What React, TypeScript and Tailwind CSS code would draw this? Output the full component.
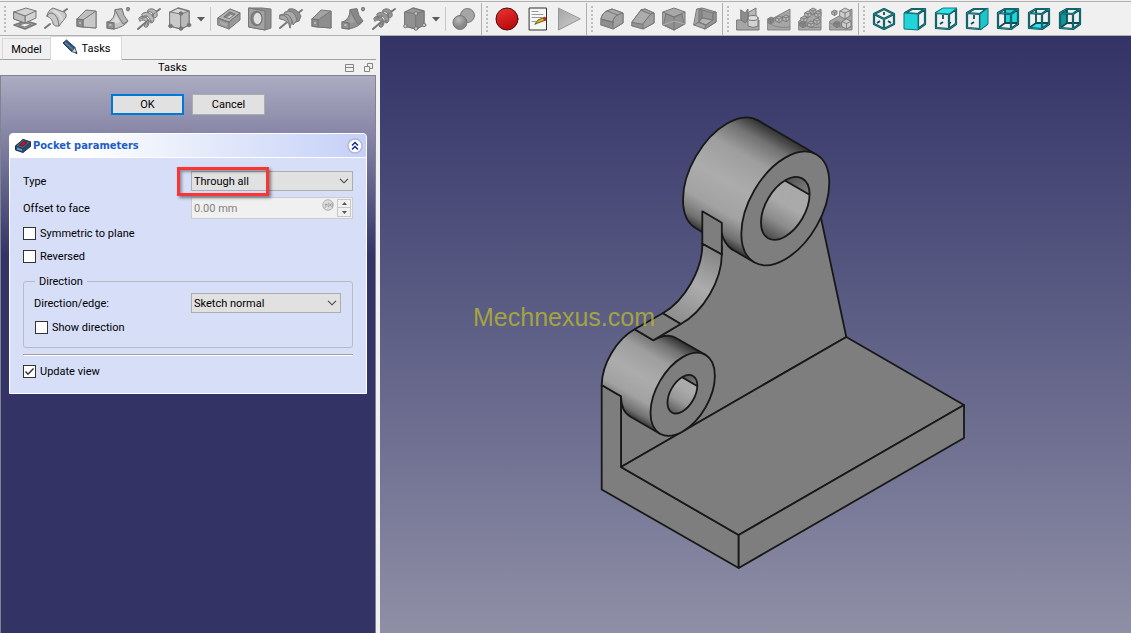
import React from "react";

type IconProps = { children: React.ReactNode; label: string };

function ToolButton({ children, label }: IconProps) {
  return (
    <button type="button" aria-label={label} className="flex h-[31px] w-[31px] shrink-0 items-center justify-center">
      <svg viewBox="0 0 24 24" className="h-6 w-6" strokeLinejoin="round" strokeLinecap="round" aria-hidden="true">
        {children}
      </svg>
    </button>
  );
}

function MenuArrow({ label }: { label: string }) {
  return (
    <button type="button" aria-label={label} className="flex h-[31px] w-3 shrink-0 items-center justify-center">
      <svg viewBox="0 0 8 5" className="h-[5px] w-2" aria-hidden="true">
        <path d="M0 0H8L4 4.5Z" fill="#5a5a5a" />
      </svg>
    </button>
  );
}

function Divider() {
  return (
    <div className="flex w-1.5 shrink-0 justify-center">
      <div className="h-6 w-px bg-[#c8c8c8]" />
    </div>
  );
}

function ToolGroup({ children, label, last = false }: IconProps & { last?: boolean }) {
  return (
    <div
      role="toolbar"
      aria-label={label}
      className={last ? "flex h-full items-center" : "flex h-full shrink-0 items-center border-r border-[#b0b0b0] pr-0.5"}
    >
      <svg viewBox="0 0 9 28" className="h-7 w-[9px] shrink-0" aria-hidden="true">
        {[1, 5, 9, 13, 17, 21, 25].map((y) => (
          <rect key={y} x="4" y={y} width="2" height="2" fill="#bdbdbd" />
        ))}
      </svg>
      {children}
    </div>
  );
}

const EDGE = "#777777";

/* Solid modelling icons */
const Pad = () => (
  <g stroke={EDGE}>
    <path d="M1 18 13 14 23 17 12 22Z" fill="#ababab" strokeWidth="1.6" />
    <path d="M6 18 13 16 18 17.5 12 20Z" fill="#ededed" />
    <path d="M1 5 13 1 23 4V11L12 16 1 12Z" fill="#d2d2d2" />
    <path d="M1 5 12 9 23 4M12 9V16" fill="none" />
    <path d="M1 5 12 9V16L1 12Z" fill="#c0c0c0" />
  </g>
);
const Revolution = () => (
  <g stroke={EDGE}>
    <path d="M1 21 6 17M19 5 23 2" strokeWidth="2" />
    <path d="M3 9Q4 3 9 1L20 5Q23 6 22 10L15 19Q11 20 9 17Q9 12 3 9Z" fill="#c9c9c9" />
    <path d="M3 9Q5 5 8 6Q14 8 15 19" fill="none" />
    <path d="M10 4Q17 7 18 13" fill="none" stroke="#dedede" strokeWidth="2" />
  </g>
);
const Loft = ({ dark = false }: { dark?: boolean }) => (
  <g stroke={EDGE}>
    <path d="M2 12 11 3 21 4V21L9 20Z" fill={dark ? "#a2a2a2" : "#bfbfbf"} />
    <path d="M8 13 21 4V21L8 20Z" fill={dark ? "#8e8e8e" : "#c8c8c8"} />
    <path d="M2 12 8 13V20L2 19Z" fill="#999" strokeWidth="1.5" />
    <path d="M4 14.500H6.500V17.500H4Z" fill="#b8b8b8" strokeWidth=".6" />
  </g>
);
const Pipe = ({ dark = false }: { dark?: boolean }) => (
  <g stroke={EDGE}>
    <path d="M2 15Q9 12 9 3L16 2Q17 11 22 14 18 20 8 22Z" fill={dark ? "#929292" : "#c6c6c6"} />
    <path d="M9 3Q13 11 17 17L22 14Q17 9 16 2Z" fill={dark ? "#888" : "#b5b5b5"} />
    <path d="M5 15Q10 12 10 7L14 15 8 17Z" fill={dark ? "#a0a0a0" : "#dcdcdc"} stroke="none" />
    <path d="M1 15 8 16V22L1 21Z" fill="#999" strokeWidth="1.4" />
    <path d="M3 17H6V19H3Z" fill="#ccc" strokeWidth=".5" />
    <ellipse cx="22" cy="2" rx="1.500" ry="2" fill="#999" />
  </g>
);
const Helix = ({ dark = false }: { dark?: boolean }) => (
  <g>
    <path d="M1 22 8 16M16 7 23 2" stroke={EDGE} strokeWidth="2" />
    <g fill={dark ? "#979797" : "#b9b9b9"} stroke={EDGE}>
      <path d="M2 11Q5 7 10 11 14 16 10 20 8 21 7 19 11 15 7 13 4 13 3 14Z" />
      <path d="M5 7Q9 3 15 8 19 13 15 16 12 16 13 14 14 11 10 9 7 8 6 10Z" />
      <path d="M11 3Q15 0 19 4 22 9 18 11 16 11 16 9 18 7 14 5 12 4 11 5Z" />
      <path d="M3 11Q8 12 10 9M10 18Q11 13 15 14M16 10Q14 8 18 6" fill="none" />
    </g>
    <path d="M8 16 11 13" stroke={EDGE} strokeWidth="1.500" />
  </g>
);
const Primitive = ({ dark = false }: { dark?: boolean }) => (
  <g stroke={EDGE}>
    <path d="M2 5 10 1 21 4V18L13 22 2 19Z" fill={dark ? "#9a9a9a" : "#d8d8d8"} strokeWidth="1.300" />
    <path d="M2 5 13 7V22L2 19Z" fill={dark ? "#919191" : "#cacaca"} />
    <path d="M13 7 21 4V18L13 22Z" fill={dark ? "#8a8a8a" : "#bababa"} />
    <g fill={dark ? "#c4c4c4" : "#777"}>
      <circle cx="13" cy="6.500" r="1.800" />
      <circle cx="2.500" cy="19" r="1.800" />
      <circle cx="13" cy="21.500" r="1.800" />
      <circle cx="21" cy="18" r="1.800" />
    </g>
  </g>
);
const Pocket = () => (
  <g stroke={EDGE}>
    <path d="M1 11 13 2 23 6V13L12 22 1 18Z" fill="#989898" />
    <path d="M1 11 13 2 23 6 12 15Z" fill="#b6b6b6" />
    <path d="M7 10 13 5 18 7 12 11.500Z" fill="#8b8b8b" strokeWidth="1.300" />
    <path d="M10 10.500 14 8 16 8.500 12 11Z" fill="#d8d8d8" stroke="none" />
    <path d="M1 11 12 15V22M12 15 23 6" fill="none" />
    <path d="M3 14 10 16.500V19.500L3 17Z" fill="#a8a8a8" stroke="none" />
  </g>
);
const Hole = () => (
  <g stroke={EDGE}>
    <path d="M1 1H14L23 2V21L17 23 1 20Z" fill="#8e8e8e" />
    <path d="M1 1 17 4V23L1 20Z" fill="#a3a3a3" />
    <ellipse cx="8.500" cy="11.500" rx="5.500" ry="7" fill="#858585" strokeWidth="1.400" />
    <ellipse cx="9.500" cy="11.500" rx="3.800" ry="5.800" fill="#e2e2e2" stroke="none" />
  </g>
);
const Groove = () => (
  <g stroke={EDGE}>
    <path d="M1 21 7 16M18 7 23 3" strokeWidth="2" />
    <path d="M10 2Q17 0 22 9L20 14 14 16 8 6Z" fill="#8e8e8e" />
    <path d="M6 5Q15 1 18 13L14 18Q13 9 6 8Z" fill="#aaa" />
    <path d="M1 8Q10 4 13 14L11 21Q10 13 1 12Z" fill="#a6a6a6" />
    <path d="M1 8Q10 6 11 21" fill="none" />
  </g>
);
const BooleanOp = () => (
  <g stroke={EDGE}>
    <circle cx="15.500" cy="8.500" r="7" fill="#a6a6a6" />
    <circle cx="8" cy="15.500" r="7" fill="url(#ball)" />
  </g>
);

/* Macro icons */
const Record = () => <circle cx="12" cy="12" r="11" fill="url(#record)" stroke="#4a1010" />;
const MacroEdit = () => (
  <g>
    <path d="M3.500 1H20.500V23H3.500Z" fill="#f5f7f5" stroke="#333" strokeLinejoin="miter" />
    <path d="M6 4.500H12M6 7.500H17M6 10.500H16M6 14.500H10" stroke="#9a9a9a" />
    <path d="M9 17 12 13 19 10 20 13 12 16Z" fill="#d9b41d" stroke="#4b4316" strokeWidth=".8" />
    <path d="M17 11 20 10.500V13L18 14Z" fill="#d92020" />
  </g>
);
const Play = () => <path d="M1.500 1.500V23L23 12Z" fill="url(#play)" stroke="#959595" />;

/* Dress-up icons */
const Fillet = () => (
  <g stroke={EDGE}>
    <path d="M1 12Q2 6 7 4L12 2 23 6V16L13 22 1 18Z" fill="#8f8f8f" />
    <path d="M1 12Q2 6 7 4L12 2 23 6 18 8Q13 10 13 15Z" fill="#a9a9a9" />
    <path d="M13 15V22L23 16V6Q13 8 13 15Z" fill="#a0a0a0" />
    <path d="M7 4 18 8M1 12 13 15" fill="none" />
  </g>
);
const Chamfer = () => (
  <g stroke={EDGE}>
    <path d="M1 15 10 3 14 2 23 6V16L12 22 1 19Z" fill="#929292" />
    <path d="M1 15 10 3 20 7 12 17Z" fill="#acacac" />
    <path d="M12 17V22L23 16V6L20 7Z" fill="#a0a0a0" />
    <path d="M10 3 14 2 23 6 20 7Z" fill="#a4a4a4" />
  </g>
);
const Draft = () => (
  <g stroke={EDGE}>
    <path d="M1 5 12 1 23 5V17L12 23 1 18Z" fill="#a8a8a8" />
    <path d="M4 7 12 10 20 7 22 17 12 23 2 18Z" fill="#929292" />
    <path d="M1 5 12 10 23 5M12 10V23" fill="none" />
    <path d="M1 18 12 14 23 17" fill="none" stroke="#b5b5b5" strokeWidth=".8" />
  </g>
);
const Thickness = () => (
  <g stroke={EDGE}>
    <path d="M4 2 9 1 23 5V15L12 22 1 18Z" fill="#a4a4a4" />
    <path d="M9 3 20 6V13L9 11Z" fill="#969696" />
    <path d="M6 3V15L9 11V3Z" fill="#8a8a8a" />
    <path d="M6 15 9 11 20 13 13 18Z" fill="#b2b2b2" />
    <path d="M13 18 20 13V6L23 5V15L12 22Z" fill="#959595" />
    <path d="M1 18 6 15 13 18" fill="none" />
  </g>
);

/* Pattern icons */
const Block = ({ x, y, s = 5, fill = "#b8b8b8" }: { x: number; y: number; s?: number; fill?: string }) => (
  <g transform={`translate(${x} ${y})`} stroke={EDGE} strokeWidth=".9">
    <path d={`M0 ${s * 0.3} ${s * 0.5} 0 ${s} ${s * 0.25}V${s * 0.8}L${s * 0.5} ${s * 1.1} 0 ${s * 0.85}Z`} fill={fill} />
    <path d={`M0 ${s * 0.3} ${s * 0.5} ${s * 0.5} ${s} ${s * 0.25}M${s * 0.5} ${s * 0.5}V${s * 1.1}`} fill="none" />
  </g>
);
const Ground = () => (
  <g stroke="#858585">
    <path d="M1 14 23 2V23H1Z" fill="#a6a6a6" />
    <path d="M1 16Q10 22 23 20" fill="none" />
  </g>
);
const Mirrored = () => (
  <g stroke={EDGE}>
    <path d="M1 13H23V23H1Z" fill="#a6a6a6" />
    <path d="M13 5 20 1V12H13Z" fill="#b8b8b8" />
    <path d="M5 3 9 6 12 2V13L9 16 5 13Z" fill="#8c8c8c" />
    <path d="M12 11V19Q17 22 22 19V11Z" fill="#d2d2d2" />
    <ellipse cx="17" cy="11" rx="5" ry="2.500" fill="#dedede" />
  </g>
);
const LinearPattern = () => (
  <g>
    <Ground />
    <Block x={1} y={10} s={6} fill="#888" />
    <Block x={9} y={9} s={6} />
    <Block x={16} y={8} s={6} />
  </g>
);
const PolarPattern = () => (
  <g>
    <Ground />
    <Block x={12} y={1} s={6} />
    <Block x={17} y={4} s={6} />
    <Block x={7} y={4} s={6} />
    <Block x={3} y={9} s={6} />
    <Block x={16} y={11} s={6} />
    <Block x={2} y={14} s={6} fill="#888" />
    <Block x={10} y={14} s={6} />
  </g>
);
const MultiTransform = () => (
  <g>
    <Ground />
    <Block x={3} y={3} />
    <Block x={11} y={1} s={10} fill="#ccc" />
    <Block x={5} y={14} s={6} fill="#888" />
    <Block x={13} y={12} s={9} fill="#ccc" />
  </g>
);

/* Standard view icons */
const CUBE_FRAME = "M2 6 9 2H22V17L15 22 2 21ZM2 6 15 7 22 2M15 7V22";
const CUBE_STUBS = "M9 8V12M6 17 9 15M14 15 17 16";
const CUBE_BACK = "M9 2V16M9 16H22M9 16 2 21";
const VIEWS: Record<string, { face: string; fill: string; back: string; over: boolean }> = {
  front: { face: "M1 6 15 7V23L1 22Z", fill: "#20d4da", back: "", over: true },
  top: { face: "M1 6 9 1H23L15 7Z", fill: "#30e3ea", back: CUBE_STUBS, over: true },
  right: { face: "M15 7 23 1V17L15 23Z", fill: "#1cc5cb", back: CUBE_STUBS, over: true },
  rear: { face: "M9 3H22V16H9Z", fill: "#20d4da", back: CUBE_BACK, over: false },
  bottom: { face: "M2 21 9 16H22L15 22Z", fill: "#30e3ea", back: CUBE_BACK, over: false },
  left: { face: "M2 6 9 2V16L2 21Z", fill: "#11969b", back: CUBE_BACK, over: false },
};
const ViewCube = ({ face }: { face: string }) => {
  const view = VIEWS[face];
  return (
    <g fill="none" strokeLinecap="butt">
      {!view.over && <path d={view.face} fill={view.fill} />}
      <path d={view.back} stroke="#0b4f54" strokeWidth="1.800" />
      <path d={CUBE_FRAME} stroke="#07424a" strokeWidth="2.200" />
      <path d={CUBE_FRAME} stroke="#21a0a6" strokeWidth=".8" />
      {view.over && <path d={view.face} fill={view.fill} stroke="#0d7177" strokeWidth=".9" />}
    </g>
  );
};
const ISO_FRAME = "M12 2 22 7V17L12 22 2 17V7ZM2 7 12 12 22 7M12 12V22";
const IsoCube = () => (
  <g fill="none" strokeLinecap="butt">
    <path d="M12 5V8M5 16 8 14M19 16 16 14" stroke="#0b4f54" strokeWidth="1.800" />
    <path d={ISO_FRAME} stroke="#07424a" strokeWidth="2.200" />
    <path d={ISO_FRAME} stroke="#21a0a6" strokeWidth=".8" />
  </g>
);

function Toolbars() {
  return (
    <header className="flex h-9 shrink-0 items-stretch overflow-hidden border-b border-[#b0b0b0] bg-[#f0f0f0] pt-px">
      <div className="flex flex-1 border-t border-[#b0b0b0] pt-px">
        <ToolGroup label="Part design">
          <ToolButton label="Pad"><Pad /></ToolButton>
          <ToolButton label="Revolution"><Revolution /></ToolButton>
          <ToolButton label="Additive loft"><Loft /></ToolButton>
          <ToolButton label="Additive pipe"><Pipe /></ToolButton>
          <ToolButton label="Additive helix"><Helix /></ToolButton>
          <ToolButton label="Additive primitive"><Primitive /></ToolButton>
          <MenuArrow label="More additive primitives" />
          <Divider />
          <ToolButton label="Pocket"><Pocket /></ToolButton>
          <ToolButton label="Hole"><Hole /></ToolButton>
          <ToolButton label="Groove"><Groove /></ToolButton>
          <ToolButton label="Subtractive loft"><Loft dark /></ToolButton>
          <ToolButton label="Subtractive pipe"><Pipe dark /></ToolButton>
          <ToolButton label="Subtractive helix"><Helix dark /></ToolButton>
          <ToolButton label="Subtractive primitive"><Primitive dark /></ToolButton>
          <MenuArrow label="More subtractive primitives" />
          <Divider />
          <ToolButton label="Boolean operation"><BooleanOp /></ToolButton>
        </ToolGroup>
        <ToolGroup label="Macro">
          <ToolButton label="Record macro"><Record /></ToolButton>
          <ToolButton label="Edit macros"><MacroEdit /></ToolButton>
          <ToolButton label="Run macro"><Play /></ToolButton>
        </ToolGroup>
        <ToolGroup label="Dress-up">
          <ToolButton label="Fillet"><Fillet /></ToolButton>
          <ToolButton label="Chamfer"><Chamfer /></ToolButton>
          <ToolButton label="Draft"><Draft /></ToolButton>
          <ToolButton label="Thickness"><Thickness /></ToolButton>
        </ToolGroup>
        <ToolGroup label="Transformations">
          <ToolButton label="Mirrored"><Mirrored /></ToolButton>
          <ToolButton label="Linear pattern"><LinearPattern /></ToolButton>
          <ToolButton label="Polar pattern"><PolarPattern /></ToolButton>
          <ToolButton label="Multi-transform"><MultiTransform /></ToolButton>
        </ToolGroup>
        <ToolGroup label="Views" last>
          <ToolButton label="Isometric"><IsoCube /></ToolButton>
          {["front", "top", "right", "rear", "bottom", "left"].map((face) => (
            <ToolButton key={face} label={face}><ViewCube face={face} /></ToolButton>
          ))}
        </ToolGroup>
      </div>
    </header>
  );
}

function Tabs() {
  return (
    <div role="tablist" className="flex h-6 shrink-0 items-stretch">
      <div className="w-0.5 border-b border-[#a0a0a0]" />
      <button role="tab" type="button" aria-selected="false" className="mt-0.5 w-12 border border-r-0 border-[#d9d9d9] border-b-[#a0a0a0]">
        Model
      </button>
      <button role="tab" type="button" aria-selected="true" className="flex w-[72px] items-center justify-center gap-1 border-x border-t border-[#d9d9d9] bg-white">
        <svg viewBox="0 0 16 16" className="mb-1 h-4 w-4" strokeLinejoin="round" aria-hidden="true">
          <path d="M1 4 4.500 1 13 8.500 9.500 12.500Z" fill="#34597c" stroke="#22384f" />
          <path d="M3 3.500 11 10.500" stroke="#5d83a7" strokeWidth="1.300" />
          <path d="M9.500 12.500 13 8.500 15 14.500Z" fill="#c7d1d8" stroke="#26384b" strokeWidth=".8" />
          <path d="M13 14 14.500 12.500 15 14.500Z" fill="#222" />
        </svg>
        Tasks
      </button>
      <div className="flex-1 border-b border-[#a0a0a0]" />
    </div>
  );
}

function TitleBar() {
  return (
    <div className="flex h-[15px] shrink-0 items-center">
      <h1 className="flex-1 text-center">Tasks</h1>
      <div className="flex gap-2.5 pr-[3px]">
        <button type="button" aria-label="Collapse">
          <svg viewBox="0 0 9 9" className="h-[9px] w-[9px]" fill="none" stroke="#858585" aria-hidden="true">
            <path d="M.5 1.500H8.500V8.500H.5ZM.5 4.500H8.500" />
          </svg>
        </button>
        <button type="button" aria-label="Float">
          <svg viewBox="0 0 9 9" className="h-[9px] w-[9px]" fill="none" stroke="#858585" aria-hidden="true">
            <path d="M.5 3.500H5.500V8.500H.5ZM3.500 3.500V.5H8.500V5.500H5.500" />
          </svg>
        </button>
      </div>
    </div>
  );
}

function Combo({ id, value, options }: { id: string; value: string; options: string[] }) {
  return (
    <div className="relative w-full">
      <select id={id} defaultValue={value} className="block h-5 w-full appearance-none border border-[#adadad] bg-[#e1e1e1] px-0.5">
        {options.map((option) => (
          <option key={option}>{option}</option>
        ))}
      </select>
      <svg viewBox="0 0 10 6" className="pointer-events-none absolute top-[7px] right-1 h-1.5 w-2.5" fill="none" stroke="#444" strokeWidth="1.100" aria-hidden="true">
        <path d="M1 .8 5 4.800 9 .8" />
      </svg>
    </div>
  );
}

function Check({ label, checked = false }: { label: string; checked?: boolean }) {
  return (
    <label className="flex h-[13px] items-center gap-1">
      <span className="relative flex">
        <input type="checkbox" defaultChecked={checked} className="peer h-[13px] w-[13px] appearance-none border border-[#333] bg-white" />
        <svg viewBox="0 0 13 13" className="pointer-events-none invisible absolute inset-0 h-[13px] w-[13px] peer-checked:visible" fill="none" stroke="#333" strokeWidth="1.400" aria-hidden="true">
          <path d="M2.500 6.500 5 9.300 10.500 3.500" />
        </svg>
      </span>
      {label}
    </label>
  );
}

function PocketBadge() {
  return (
    <svg viewBox="0 0 16 16" className="h-4 w-4" strokeLinejoin="round" aria-hidden="true">
      <path d="M.5 8 8 1.500 15.500 4V8.500L8 14.500 .5 12Z" fill="#2b4c6e" stroke="#1d3149" />
      <path d="M.5 8 8 1.500 15.500 4 8 10.500Z" fill="#42678c" stroke="#1d3149" strokeWidth=".8" />
      <path d="M4.500 7 8.500 3.500 12 4.500 8 8Z" fill="#d81313" stroke="#5a1018" strokeWidth=".8" />
      <path d="M2 9.500 7 11.200V13L2 11.500Z" fill="#6b9ccc" />
    </svg>
  );
}

function PocketPanel() {
  return (
    <section className="mx-2 mt-[18px] overflow-hidden rounded-t border border-white bg-[#d6def8]">
      <header className="flex h-6 items-center gap-0.5 border-b border-white bg-linear-to-r from-white from-20% to-[#c4d0f6] pr-[3px] pl-[5px]">
        <PocketBadge />
        <h2 className="flex-1 font-['DejaVu_Sans_Condensed','Noto_Sans',sans-serif] font-bold text-[#215dc6]">Pocket parameters</h2>
        <button type="button" aria-label="Collapse pocket parameters">
          <svg viewBox="0 0 16 16" className="h-4 w-4" fill="none" aria-hidden="true">
            <circle cx="8" cy="8" r="7" fill="white" stroke="#b1b6d9" strokeWidth="1.500" />
            <path d="M5 7.500 8 4.500 11 7.500M5 11.500 8 8.500 11 11.500" stroke="#102b91" strokeWidth="1.500" />
          </svg>
        </button>
      </header>
      <div className="px-[13px] pt-[13px] pb-[15px]">
        <div className="grid grid-cols-[1fr_162px] items-center gap-y-1.5">
          <label htmlFor="type">Type</label>
          <div className="relative">
            <Combo id="type" value="Through all" options={["Dimension", "Through all", "To first", "Up to face"]} />
            <div className="pointer-events-none absolute -top-1 -left-3.5 h-[29px] w-[92px] border-3 border-[#fb3434] shadow-[2px_2px_3px_rgba(0,0,0,0.45),inset_2px_2px_3px_rgba(0,0,0,0.35)]" />
          </div>
          <label htmlFor="offset">Offset to face</label>
          <div className="flex h-[22px] items-center border border-[#ccc] bg-[#f0f0f0] pr-px">
            <input id="offset" disabled defaultValue="0.00 mm" className="w-full min-w-0 flex-1 px-0.5 text-[#838383]" />
            <svg viewBox="0 0 13 13" className="mr-[3px] mb-1.5 h-3 w-3 shrink-0" aria-hidden="true">
              <circle cx="6.500" cy="6.500" r="5.700" fill="#dedede" stroke="#aaa" />
              <path d="M3 10Q4.500 9 4.500 5M3 6H5.500M7 4Q6 6.500 7 9M8 5 10 8M10 5 8 8M10.500 4Q11.500 6.500 10.500 9" stroke="#999" strokeWidth=".9" fill="none" />
            </svg>
            <div className="flex flex-col">
              <button type="button" disabled aria-label="Increase" className="flex h-[9px] w-3.5 items-center justify-center border border-[#c8c8c8]">
                <svg viewBox="0 0 5 3" className="h-[3px] w-[5px]"><path d="M0 3 2.500 0 5 3Z" fill="#555" /></svg>
              </button>
              <button type="button" disabled aria-label="Decrease" className="flex h-[9px] w-3.5 items-center justify-center border border-t-0 border-[#c8c8c8]">
                <svg viewBox="0 0 5 3" className="h-[3px] w-[5px]"><path d="M0 0H5L2.500 3Z" fill="#555" /></svg>
              </button>
            </div>
          </div>
        </div>
        <div className="mt-2 flex flex-col gap-2.5">
          <Check label="Symmetric to plane" />
          <Check label="Reversed" />
        </div>
        <fieldset className="mt-[11px] min-w-0 rounded-[3px] border border-[#b9bcc4] pr-[11px] pb-[13px] pl-2.5">
          <legend className="ml-px px-1 leading-[15px]">Direction</legend>
          <div className="mt-1 grid grid-cols-[1fr_150px] items-center">
            <label htmlFor="edge">Direction/edge:</label>
            <Combo id="edge" value="Sketch normal" options={["Sketch normal", "Select reference...", "Custom direction"]} />
          </div>
          <div className="mt-2 pl-px"><Check label="Show direction" /></div>
        </fieldset>
        <hr className="mt-1.5 mb-[9px] h-0.5 border-t border-b border-t-[#a0a0a0] border-b-white" />
        <Check label="Update view" checked />
      </div>
    </section>
  );
}

function TaskPanel() {
  return (
    <aside className="mr-1 flex w-[376px] shrink-0 flex-col">
      <Tabs />
      <TitleBar />
      <div className="flex-1 border border-t-[#828290] border-r-[#828290] border-b-0 border-l-[#828290] bg-[#333366] bg-linear-to-b from-[#acacc2] via-[#8583a5] via-[62px] to-[#333366] to-[180px]">
        <div className="mt-[18px] flex justify-center gap-2">
          <button type="button" className="h-[21px] w-[73px] border-2 border-[#0078d7] bg-[#e1e1e1]">OK</button>
          <button type="button" className="h-[21px] w-[73px] border border-[#adadad] bg-[#e1e1e1]">Cancel</button>
        </div>
        <PocketPanel />
      </div>
    </aside>
  );
}

function Model() {
  return (
    <svg viewBox="380 36 751 597" className="h-full w-full" preserveAspectRatio="xMidYMid meet" role="img" aria-label="Bracket model">
      <defs>
        <linearGradient id="bigBoss" gradientUnits="userSpaceOnUse" x1="696" y1="228" x2="758" y2="120">
          <stop offset="0" stopColor="#383838" />
          <stop offset=".07" stopColor="#707070" />
          <stop offset=".22" stopColor="#a2a2a2" />
          <stop offset=".45" stopColor="#acacac" />
          <stop offset=".7" stopColor="#9e9e9e" />
          <stop offset=".87" stopColor="#727272" />
          <stop offset="1" stopColor="#303030" />
        </linearGradient>
        <linearGradient id="smallBoss" gradientUnits="userSpaceOnUse" x1="631" y1="417" x2="676.500" y2="338.200">
          <stop offset="0" stopColor="#383838" />
          <stop offset=".07" stopColor="#707070" />
          <stop offset=".22" stopColor="#a2a2a2" />
          <stop offset=".45" stopColor="#acacac" />
          <stop offset=".7" stopColor="#9e9e9e" />
          <stop offset=".87" stopColor="#727272" />
          <stop offset="1" stopColor="#303030" />
        </linearGradient>
        <linearGradient id="bigBore" gradientUnits="userSpaceOnUse" x1="768" y1="238" x2="800" y2="184">
          <stop offset="0" stopColor="#4c4c4c" />
          <stop offset=".3" stopColor="#8c8c8c" />
          <stop offset=".6" stopColor="#aaaaaa" />
          <stop offset="1" stopColor="#a8a8a8" />
        </linearGradient>
        <linearGradient id="smallBore" gradientUnits="userSpaceOnUse" x1="672" y1="412" x2="692" y2="379">
          <stop offset="0" stopColor="#5c5c5c" />
          <stop offset=".35" stopColor="#989898" />
          <stop offset=".7" stopColor="#ababab" />
        </linearGradient>
        <linearGradient id="boreShade" x1="0" y1="0" x2="1" y2="1">
          <stop offset="0" stopColor="#444" />
          <stop offset="1" stopColor="#858585" />
        </linearGradient>
        <linearGradient id="bend" gradientUnits="userSpaceOnUse" x1="712" y1="246" x2="672" y2="320">
          <stop offset="0" stopColor="#828282" />
          <stop offset=".5" stopColor="#acacac" />
          <stop offset="1" stopColor="#8c8c8c" />
        </linearGradient>
        <clipPath id="bigBoreClip"><ellipse cx="785.300" cy="208.400" rx="34.400" ry="19.800" transform="rotate(-60 785.300 208.400)" /></clipPath>
        <clipPath id="smallBoreClip"><ellipse cx="682.400" cy="394.200" rx="21.100" ry="12.200" transform="rotate(-60 682.400 394.200)" /></clipPath>
      </defs>
      <g stroke="#181818" strokeWidth="1.800" strokeLinejoin="round" fill="#7e7e7e">
        <path d="M821 218 846.300 337 621 467V396L653.300 340.300 680.700 324 721.700 254V210Z" />
        <path d="M601.700 385 621 396.200V467L738.700 535V568L601.700 489.500Z" />
        <path d="M846.300 337 964 405 738.700 535 621 467Z" />
        <path d="M964 405V438L738.700 568V535Z" />

        <path d="M758.100 120.400 816.400 154.500 754.200 262.300 695.900 228.200A62.200 35.900 -60 0 1 758.100 120.400Z" fill="url(#bigBoss)" />
        <path d="M721.500 226V245L731 250Q722.500 243 721.500 226Z" stroke="none" />
        <path d="M721.700 233Q724 244 733 250" fill="none" />
        <ellipse cx="785.300" cy="208.400" rx="62.200" ry="35.900" transform="rotate(-60 785.300 208.400)" />
        <g clipPath="url(#bigBoreClip)">
          <path d="M755 170H815V245H755Z" fill="url(#bigBore)" stroke="none" />
          <path d="M785.700 181 810 195V170H785Z" fill="url(#boreShade)" />
        </g>
        <ellipse cx="785.300" cy="208.400" rx="34.400" ry="19.800" transform="rotate(-60 785.300 208.400)" fill="none" />

        <path d="M702.300 211.300 721.800 222.700V254.500L702.300 243.700Z" />
        <path d="M702.300 243.700A56 32.300 -60 0 1 662.700 313.300L680.700 324A56 32.300 -60 0 0 721.800 254.500Z" fill="url(#bend)" />

        <path d="M601.700 385A45.500 26.300 -60 0 1 634.700 329.300L653.300 340.300A45.500 26.300 -60 0 1 676.500 338.200L705.400 354.900 660 433.700 631 417A45.500 26.300 -60 0 1 621 396.200Z" fill="url(#smallBoss)" />
        <path d="M662.700 313.300 634.700 329.300 653.300 340.300 680.700 324Z" />
        <ellipse cx="682.700" cy="394.300" rx="45.500" ry="26.300" transform="rotate(-60 682.700 394.300)" />
        <g clipPath="url(#smallBoreClip)">
          <path d="M660 370H702V420H660Z" fill="url(#smallBore)" stroke="none" />
          <path d="M682.500 377.500 698 386.500V370H682Z" fill="url(#boreShade)" />
        </g>
        <ellipse cx="682.400" cy="394.200" rx="21.100" ry="12.200" transform="rotate(-60 682.400 394.200)" fill="none" />
      </g>
      <text x="473" y="326" fontSize="25" fill="#b9b72f" fillOpacity=".8" className="font-['Liberation_Sans',sans-serif]">Mechnexus.com</text>
    </svg>
  );
}

export default function App() {
  return (
    <div className="flex h-screen flex-col overflow-hidden bg-[#f0f0f0] font-['Roboto',sans-serif] text-[11px] leading-[15px] text-black">
      <svg className="absolute h-0 w-0" aria-hidden="true">
        <defs>
          <radialGradient id="ball" cx=".4" cy=".3"><stop stopColor="#bbb" /><stop offset="1" stopColor="#888" /></radialGradient>
          <linearGradient id="record" x1="0" y1="0" x2=".4" y2="1"><stop stopColor="#f23232" /><stop offset="1" stopColor="#b90d0d" /></linearGradient>
          <linearGradient id="play" x1="0" y1="0" x2="1" y2="1"><stop stopColor="#a5a5a5" /><stop offset="1" stopColor="#d0d0d0" /></linearGradient>
        </defs>
      </svg>
      <Toolbars />
      <div className="flex min-h-0 flex-1">
        <TaskPanel />
        <main className="min-w-0 flex-1 bg-linear-to-b from-[#333366] to-[#8f8fa6]">
          <Model />
        </main>
      </div>
    </div>
  );
}
